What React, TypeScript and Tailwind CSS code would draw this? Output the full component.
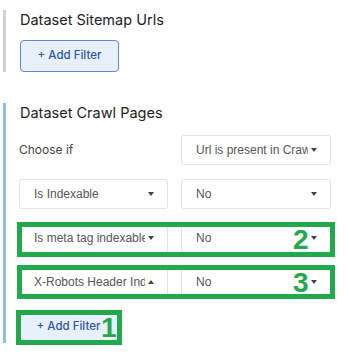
import React from "react";

const Caret = ({ up = false }: { up?: boolean }) =>
  up ? (
    <span className="inline-block w-0 h-0 border-l-[3px] border-r-[3px] border-b-[4px] border-l-transparent border-r-transparent border-b-[#444]" />
  ) : (
    <span className="inline-block w-0 h-0 border-l-[3px] border-r-[3px] border-t-[4px] border-l-transparent border-r-transparent border-t-[#444]" />
  );

const Select = ({ text, up = false }: { text: string; up?: boolean }) => (
  <div className="h-[30px] border border-[#e3e3e3] rounded-[3px] bg-white flex items-center pl-[14px] pr-[13px] text-[12px] text-[#555] font-['Liberation_Sans',Arial,sans-serif]">
    <span className="flex-1 overflow-hidden whitespace-nowrap">{text}</span>
    <span className="ml-[3px] flex items-center">
      <Caret up={up} />
    </span>
  </div>
);

const AddFilter = () => (
  <button className="h-[32px] w-[99px] rounded-[4px] border border-[#5b8ad8] bg-[#e8f0fd] text-[11.5px] font-medium text-[#2f57a6] font-['Inter',sans-serif]">
    + Add Filter
  </button>
);

const Digit = ({ n, className }: { n: string; className: string }) => (
  <span className={"absolute font-bold text-[#22a94b] text-[28px] leading-none font-['Liberation_Sans',Arial,sans-serif] " + className}>
    {n}
  </span>
);

export default function App() {
  return (
    <div className="w-[349px] h-[354px] bg-white relative overflow-hidden font-['Inter',sans-serif]">
      <div className="mt-[10px] ml-[3px] border-l-[3px] border-[#d2d2d2] pl-[14px] flex flex-col">
        <div className="leading-[20px] text-[14.5px] text-[#222]">Dataset Sitemap Urls</div>
        <div className="mt-[10px]">
          <AddFilter />
        </div>
      </div>

      <div className="mt-[31px] ml-[3px] border-l-[3px] border-[#8cbfe3] pl-[13px] flex flex-col">
        <div className="leading-[20px] text-[14.5px] text-[#222] ml-[1px]">Dataset Crawl Pages</div>
        <div className="mt-[12px] grid grid-cols-[149px_150px] gap-x-[13px] gap-y-[14px]">
          <div className="h-[30px] flex items-center text-[12px] text-[#444]">Choose if</div>
          <Select text="Url is present in Crawl" />
          <Select text="Is Indexable" />
          <Select text="No" />
          <Select text="Is meta tag indexable" />
          <Select text="No" />
          <Select text="X-Robots Header Indexable" up />
          <Select text="No" />
        </div>
        <div className="mt-[14px]">
          <AddFilter />
        </div>
      </div>

      <div className="absolute left-[17px] top-[222px] w-[318px] h-[35px] border-[5px] border-[#22a94b]" />
      <div className="absolute left-[17px] top-[265px] w-[318px] h-[34px] border-[5px] border-[#22a94b]" />
      <div className="absolute left-[16px] top-[310px] w-[106px] h-[35px] border-[5px] border-[#22a94b]" />
      <Digit n="2" className="left-[293px] top-[226px]" />
      <Digit n="3" className="left-[293px] top-[269px]" />
      <Digit n="1" className="left-[101px] top-[314px]" />
    </div>
  );
}
